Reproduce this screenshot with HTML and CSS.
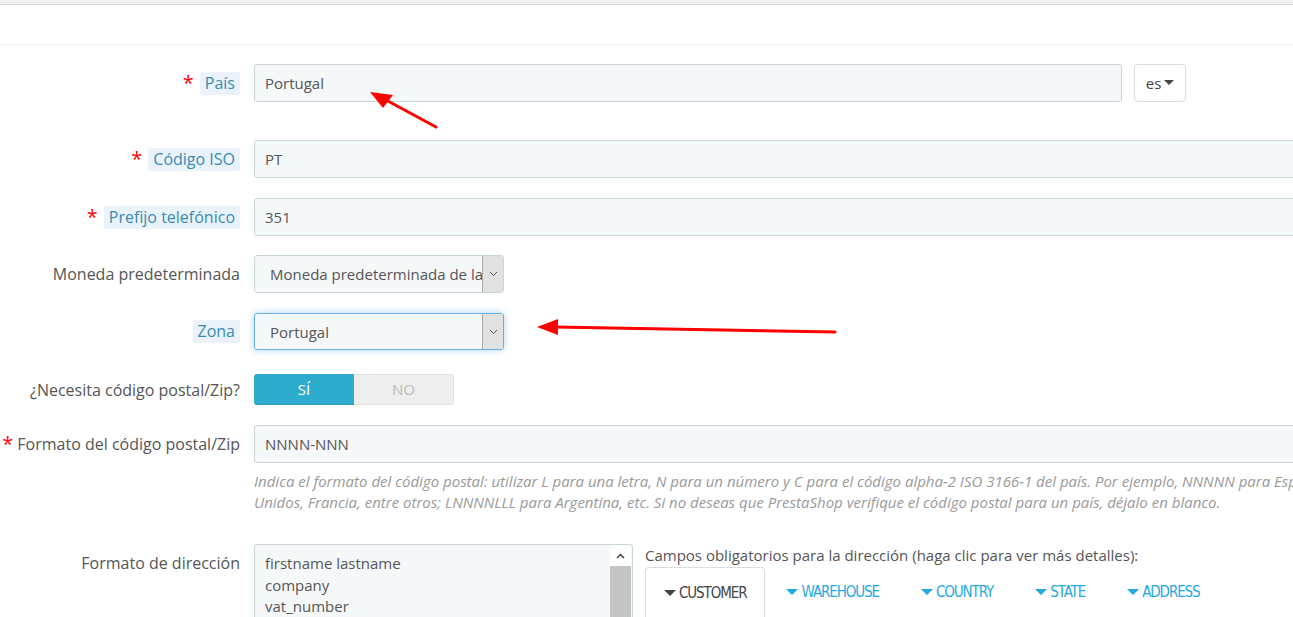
FILE: index.html
```html
<!DOCTYPE html>
<html lang="es">
<head>
<meta charset="utf-8">
<title>País</title>
<link rel="stylesheet" href="styles.css">
</head>
<body>
<div class="page">
  <div class="topbar"></div>
  <div class="panel-head"></div>
  <div class="form">
    <div class="row row-pais">
      <div class="label"><span class="req">*</span><span class="pill">País</span></div>
      <div class="field field-flex">
        <div class="input input-short">Portugal</div>
        <div class="lang">es <span class="caret"></span></div>
      </div>
    </div>
    <div class="row row-iso">
      <div class="label"><span class="req">*</span><span class="pill">Código ISO</span></div>
      <div class="field"><div class="input">PT</div></div>
    </div>
    <div class="row row-pref">
      <div class="label"><span class="req">*</span><span class="pill">Prefijo telefónico</span></div>
      <div class="field"><div class="input">351</div></div>
    </div>
    <div class="row row-mon">
      <div class="label">Moneda predeterminada</div>
      <div class="field">
        <div class="select"><span class="select-text">Moneda predeterminada de la</span><span class="select-btn"><svg width="9" height="6" viewBox="0 0 9 6"><path d="M1 1l3.5 3.5L8 1" fill="none" stroke="#555" stroke-width="1"/></svg></span></div>
      </div>
    </div>
    <div class="row row-zona">
      <div class="label"><span class="pill">Zona</span></div>
      <div class="field">
        <div class="select select-focus"><span class="select-text">Portugal</span><span class="select-btn"><svg width="9" height="6" viewBox="0 0 9 6"><path d="M1 1l3.5 3.5L8 1" fill="none" stroke="#555" stroke-width="1"/></svg></span></div>
      </div>
    </div>
    <div class="row row-zip">
      <div class="label">¿Necesita código postal/Zip?</div>
      <div class="field">
        <div class="switch"><span class="sw-on">SÍ</span><span class="sw-off">NO</span></div>
      </div>
    </div>
    <div class="row row-fmt">
      <div class="label"><span class="req req-tight">*</span>Formato del código postal/Zip</div>
      <div class="field"><div class="input">NNNN-NNN</div></div>
    </div>
    <div class="help">
      <div class="help-line">Indica el formato del código postal: utilizar L para una letra, N para un número y C para el código alpha-2 ISO 3166-1 del país. Por ejemplo, NNNNN para España, Estados</div>
      <div class="help-line">Unidos, Francia, entre otros; LNNNNLLL para Argentina, etc. Si no deseas que PrestaShop verifique el código postal para un país, déjalo en blanco.</div>
    </div>
    <div class="row row-dir">
      <div class="label label-top">Formato de dirección</div>
      <div class="field field-flex field-top">
        <div class="textarea">
          <div class="ta-text">
            <div>firstname lastname</div>
            <div>company</div>
            <div>vat_number</div>
          </div>
          <div class="ta-scroll">
            <div class="ta-up"><svg width="9" height="6" viewBox="0 0 9 6"><path d="M1 5L4.5 1.5L8 5" fill="none" stroke="#444" stroke-width="1.5"/></svg></div>
            <div class="ta-thumb"></div>
          </div>
        </div>
        <div class="fields-box">
          <div class="fields-title">Campos obligatorios para la dirección (haga clic para ver más detalles):</div>
          <div class="tabs">
            <div class="tab tab-active"><span class="tcaret"></span>CUSTOMER</div>
            <div class="tab"><span class="tcaret"></span>WAREHOUSE</div>
            <div class="tab"><span class="tcaret"></span>COUNTRY</div>
            <div class="tab"><span class="tcaret"></span>STATE</div>
            <div class="tab"><span class="tcaret"></span>ADDRESS</div>
          </div>
        </div>
      </div>
    </div>
  </div>
  <svg class="annot" width="1293" height="617" viewBox="0 0 1293 617">
    <line x1="436" y1="127" x2="386" y2="100" stroke="#f00" stroke-width="3" stroke-linecap="round"/>
    <polygon points="370,92 393,95 383,108" fill="#f00"/>
    <line x1="835" y1="332" x2="555" y2="327" stroke="#f00" stroke-width="3" stroke-linecap="round"/>
    <polygon points="537,327 558,319 558,335" fill="#f00"/>
  </svg>
</div>
</body>
</html>
```
FILE: styles.css
```css
html, body {
  margin: 0;
  padding: 0;
  background: #fff;
  overflow: hidden;
}
body {
  font-family: "Open Sans", "Noto Sans", sans-serif;
  color: #555;
}
.page {
  position: relative;
  width: 1293px;
  height: 617px;
  overflow: hidden;
}
.topbar {
  height: 4px;
  background: #eff1f2;
  border-bottom: 1px solid #d3d9dc;
}
.panel-head {
  height: 39px;
  border-bottom: 1px solid #eceeef;
}
.form {
  padding-top: 19px;
  width: 1500px;
}
.row {
  display: flex;
  align-items: center;
}
.label {
  width: 240px;
  flex: none;
  text-align: right;
  font-size: 16px;
  color: #555;
  display: flex;
  justify-content: flex-end;
  align-items: center;
  white-space: nowrap;
}
.label-top {
  align-self: flex-start;
  padding-top: 8px;
}
.field {
  margin-left: 14px;
  flex: 1;
}
.field-flex {
  display: flex;
  align-items: center;
}
.field-top {
  align-items: flex-start;
}
.req {
  color: #f00;
  font-size: 20px;
  line-height: 1;
  margin-right: 6px;
}
.req-tight {
  margin-right: 4px;
}
.pill {
  background: #e9f3f9;
  color: #3a8ab4;
  border-radius: 3px;
  padding: 0 5px;
  height: 23px;
  line-height: 23px;
  display: inline-block;
}
.input {
  box-sizing: border-box;
  height: 38px;
  background: #f5f8f9;
  border: 1px solid #c7d6db;
  border-radius: 3px;
  padding: 0 10px;
  font-size: 15px;
  line-height: 37px;
  color: #555;
}
.input-short {
  width: 868px;
}
.lang {
  box-sizing: border-box;
  margin-left: 12px;
  width: 52px;
  height: 38px;
  border: 1px solid #dcdcdc;
  border-radius: 4px;
  background: #fff;
  font-size: 15px;
  color: #444;
  display: flex;
  align-items: center;
  justify-content: center;
  gap: 3px;
}
.caret {
  width: 0;
  height: 0;
  border-left: 5px solid transparent;
  border-right: 5px solid transparent;
  border-top: 5px solid #444;
  margin-top: -2px;
}
.row-pais { margin-bottom: 38px; }
.row-iso { margin-bottom: 20px; }
.row-pref { margin-bottom: 19px; }
.row-mon { margin-bottom: 20px; }
.row-zona { margin-bottom: 24px; }
.row-zip { margin-bottom: 20px; }
.select {
  box-sizing: border-box;
  width: 250px;
  height: 38px;
  background: #f5f8f9;
  border: 1px solid #c7d6db;
  border-radius: 3px;
  display: flex;
  font-size: 15px;
  line-height: 36px;
  overflow: hidden;
}
.select-focus {
  border-color: #66afe9;
  box-shadow: 0 0 7px rgba(102, 175, 233, 0.55);
  height: 37px;
}
.select-text {
  flex: 1;
  padding-left: 15px;
  white-space: nowrap;
  overflow: hidden;
}
.select-btn {
  flex: none;
  box-sizing: border-box;
  width: 21px;
  background: #e1e1e1;
  border-left: 1px solid #a8a8a8;
  display: flex;
  align-items: center;
  justify-content: center;
}
.switch {
  display: flex;
  width: 200px;
  height: 31px;
  border-radius: 3px;
  overflow: hidden;
  font-size: 15px;
}
.sw-on {
  width: 100px;
  background: #2eacce;
  color: #fff;
  text-align: center;
  line-height: 31px;
  box-shadow: inset 0 -1px 0 rgba(0,0,0,0.1);
}
.sw-off {
  width: 100px;
  background: #eee;
  color: #bbb;
  text-align: center;
  line-height: 29px;
  border: 1px solid #e0e0e0;
  border-left: none;
  box-sizing: border-box;
}
.help {
  margin-left: 254px;
  margin-top: 8px;
  font-size: 15px;
  font-style: italic;
  color: #9a9a9a;
  line-height: 21px;
  white-space: nowrap;
}
.row-dir {
  margin-top: 31px;
}
.textarea {
  box-sizing: border-box;
  width: 379px;
  height: 120px;
  flex: none;
  background: #f5f8f9;
  border: 1px solid #c7d6db;
  border-radius: 3px;
  display: flex;
}
.ta-text {
  flex: 1;
  padding: 8px 10px;
  font-size: 15px;
  line-height: 21.5px;
  color: #555;
}
.ta-scroll {
  width: 21px;
  display: flex;
  flex-direction: column;
  margin-right: 1px;
}
.ta-up {
  height: 21px;
  background: #fff;
  display: flex;
  align-items: center;
  justify-content: center;
}
.ta-thumb {
  flex: 1;
  background: #c4c4c4;
}
.fields-box {
  margin-left: 12px;
  flex: 1;
}
.fields-title {
  font-size: 15px;
  color: #555;
  line-height: 20px;
  margin-top: 1px;
}
.tabs {
  margin-top: 2px;
  display: flex;
  border-bottom: 1px solid #ddd;
  height: 50px;
}
.tab {
  font-family: "DejaVu Sans Condensed", "DejaVu Sans", sans-serif;
  font-stretch: condensed;
  font-size: 15px;
  letter-spacing: -1.1px;
  color: #1fa9e1;
  height: 50px;
  line-height: 50px;
  padding: 0 21px;
  display: flex;
  align-items: center;
  white-space: nowrap;
}
.tab-active {
  color: #444;
  border: 1px solid #ddd;
  border-bottom: none;
  border-radius: 4px 4px 0 0;
  background: #fff;
  padding: 0 18px 0 18px;
  box-sizing: border-box;
  height: 51px;
  margin-bottom: -1px;
}
.tcaret {
  width: 0;
  height: 0;
  border-left: 6px solid transparent;
  border-right: 6px solid transparent;
  border-top: 6px solid currentColor;
  margin-right: 3px;
}
.annot {
  position: absolute;
  left: 0;
  top: 0;
  pointer-events: none;
}
```
